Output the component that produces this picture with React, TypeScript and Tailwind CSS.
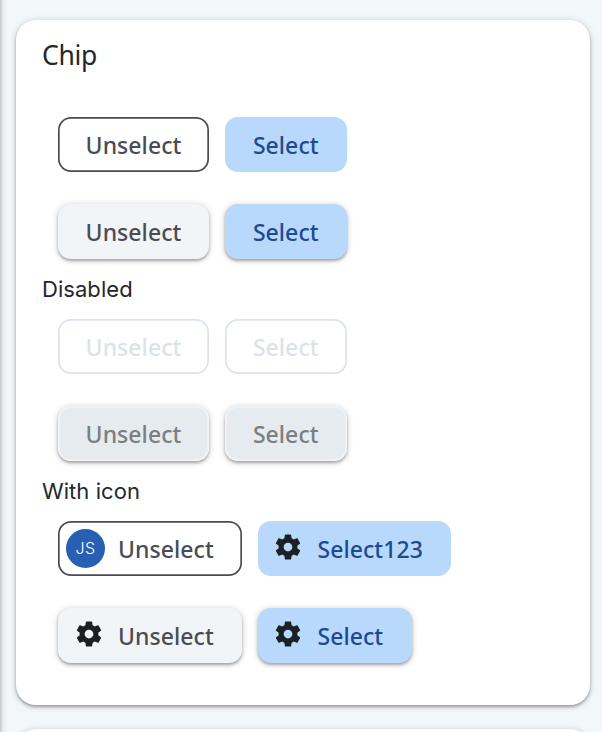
import type { ReactNode } from 'react'

type Variant = 'outlined' | 'selected' | 'elevated' | 'selectedElevated' | 'disabled' | 'disabledElevated'

const variants: Record<Variant, string> = {
  outlined: 'bg-white text-[#4b4c53] shadow-[inset_0_0_0_1.7px_#4b4b52]',
  selected: 'bg-[#b8d8fc] text-[#1e4a90]',
  elevated: 'bg-[#f1f5f8] text-[#4b4c53] shadow-[0_2px_3px_rgba(0,0,0,0.28),0_1px_6px_1px_rgba(0,0,0,0.14)]',
  selectedElevated: 'bg-[#b8d8fc] text-[#1e4a90] shadow-[0_2px_3px_rgba(0,0,0,0.28),0_1px_6px_1px_rgba(0,0,0,0.14)]',
  disabled: 'bg-white text-[#dbe3e8] shadow-[inset_0_0_0_1.7px_#dbe3e8]',
  disabledElevated:
    'bg-[#e5ebef] text-[#7b7e82] shadow-[inset_0_0_0_1.7px_#f0f4f8,0_2px_3px_rgba(0,0,0,0.28),0_1px_6px_1px_rgba(0,0,0,0.14)]',
}

function Chip({ variant, width, icon, children }: { variant: Variant; width: string; icon?: ReactNode; children: ReactNode }) {
  return (
    <button
      className={`flex h-[55px] shrink-0 items-center rounded-[13px] pt-px font-['Noto_Sans',sans-serif] text-[23px] font-medium leading-none tracking-[0.06px] ${width} ${variants[variant]} ${icon ? '' : 'justify-center'}`}
    >
      {icon}
      <span>{children}</span>
    </button>
  )
}

function Gear() {
  return (
    <span className="flex w-[60px] shrink-0 pb-1 pl-[15.5px]">
      <svg viewBox="0 0 24 24" className="size-[30px] fill-[#1a2024]">
        <path d="M19.43 12.98c.04-.32.07-.64.07-.98s-.03-.66-.07-.98l2.11-1.65c.19-.15.24-.42.12-.64l-2-3.46c-.12-.22-.39-.3-.61-.22l-2.49 1c-.52-.4-1.08-.73-1.69-.98l-.38-2.65C14.46 2.18 14.25 2 14 2h-4c-.25 0-.46.18-.49.42l-.38 2.65c-.61.25-1.17.59-1.69.98l-2.49-1c-.23-.09-.49 0-.61.22l-2 3.46c-.13.22-.07.49.12.64l2.11 1.65c-.04.32-.07.65-.07.98s.03.66.07.98l-2.11 1.65c-.19.15-.24.42-.12.64l2 3.46c.12.22.39.3.61.22l2.49-1c.52.4 1.08.73 1.69.98l.38 2.65c.03.24.24.42.49.42h4c.25 0 .46-.18.49-.42l.38-2.65c.61-.25 1.17-.59 1.69-.98l2.49 1c.23.09.49 0 .61-.22l2-3.46c.12-.22.07-.49-.12-.64l-2.11-1.65zM12 15.5c-1.93 0-3.5-1.57-3.5-3.5s1.57-3.5 3.5-3.5 3.5 1.57 3.5 3.5-1.57 3.5-3.5 3.5z" />
      </svg>
    </span>
  )
}

function Avatar() {
  return (
    <span className="flex w-[60px] shrink-0 pb-0.5 pl-2">
      <span className="flex size-[39px] items-center justify-center rounded-full bg-[#285fb5] font-['Inter',sans-serif] text-[16px] font-light tracking-[0.3px] text-white">
        JS
      </span>
    </span>
  )
}

function Row({ children }: { children: ReactNode }) {
  return <div className="flex h-[55px] gap-4 pl-4">{children}</div>
}

function Label({ children }: { children: ReactNode }) {
  return (
    <div className="my-4 flex h-7 items-center font-['Inter',sans-serif] text-[22px] leading-7 tracking-[0.05px] text-[#23282c]">{children}</div>
  )
}

const cardShadow = 'shadow-[0_2px_3px_rgba(0,0,0,0.28),0_1px_6px_1px_rgba(0,0,0,0.14)]'

export default function App() {
  return (
    <main className="flex h-[732px] w-[602px] overflow-hidden bg-[#f2f7fa]">
      <div className="w-4 shrink-0 bg-linear-to-r from-[#c5c8cc] from-[0px] via-[#e8ecf0] via-[3px] to-[#f2f7fa] to-[8px]" />
      <div className="pt-5">
        <section className={`h-[685px] w-[574px] rounded-[20px] bg-white pl-[26px] ${cardShadow}`}>
          <h1 className="flex h-[97px] pt-4 font-['Noto_Sans',sans-serif] text-[26.5px] leading-[38px] tracking-[-0.3px] text-[#23282c]">Chip</h1>
          <Row>
            <Chip variant="outlined" width="w-[151px]">Unselect</Chip>
            <Chip variant="selected" width="w-[121.5px]">Select</Chip>
          </Row>
          <div className="mt-8">
            <Row>
              <Chip variant="elevated" width="w-[151px]">Unselect</Chip>
              <Chip variant="selectedElevated" width="w-[121.5px]">Select</Chip>
            </Row>
          </div>
          <Label>Disabled</Label>
          <Row>
            <Chip variant="disabled" width="w-[151px]">Unselect</Chip>
            <Chip variant="disabled" width="w-[121.5px]">Select</Chip>
          </Row>
          <div className="mt-8">
            <Row>
              <Chip variant="disabledElevated" width="w-[151px]">Unselect</Chip>
              <Chip variant="disabledElevated" width="w-[121.5px]">Select</Chip>
            </Row>
          </div>
          <Label>With icon</Label>
          <Row>
            <Chip variant="outlined" width="w-[183.5px]" icon={<Avatar />}>Unselect</Chip>
            <Chip variant="selected" width="w-[193px]" icon={<Gear />}>Select123</Chip>
          </Row>
          <div className="mt-8">
            <Row>
              <Chip variant="elevated" width="w-[183.5px]" icon={<Gear />}>Unselect</Chip>
              <Chip variant="selectedElevated" width="w-[154px]" icon={<Gear />}>Select</Chip>
            </Row>
          </div>
        </section>
        <section className={`mt-6 h-40 w-[574px] rounded-[20px] bg-white ${cardShadow}`} />
      </div>
    </main>
  )
}
